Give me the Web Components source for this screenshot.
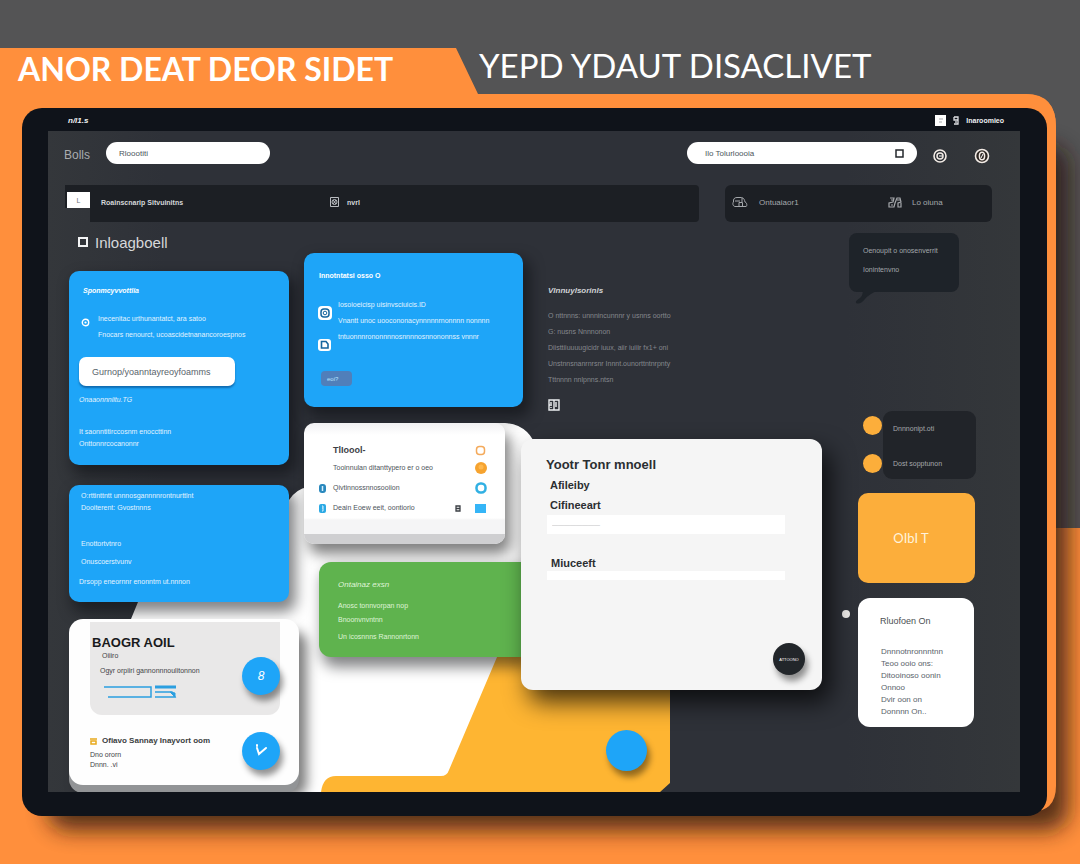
<!DOCTYPE html>
<html lang="en">
<head>
<meta charset="utf-8">
<meta name="viewport" content="width=device-width, initial-scale=1">
<title>Inloagboell</title>
<style>
  body { margin: 0; background: #545455; font-family: "Liberation Sans", Arial, sans-serif; }
</style>
</head>
<body>
<demo-page></demo-page>
<script>
const base = `
  * { box-sizing: border-box; }
  :host { display: block; }
  p, h1, h2, h3, ul, form { margin: 0; padding: 0; }
  ul { list-style: none; }
  p, li { font-size: 7px; line-height: 12px; white-space: nowrap; }
  svg { display: block; flex: none; }
  button, input { font-family: inherit; border: 0; margin: 0; }
  button { padding: 0; cursor: pointer; }
`;
function define(name, css, html) {
  const template = document.createElement('template');
  template.innerHTML = `<style>${base}${css}</style>${html}`;
  customElements.define(name, class extends HTMLElement {
    constructor() {
      super();
      this.attachShadow({ mode: 'open' }).append(template.content.cloneNode(true));
    }
    /* An element with a value attribute hands it to its inner text box. */
    connectedCallback() {
      if (this.hasAttribute('value')) this.shadowRoot.querySelector('input').value = this.getAttribute('value');
    }
  });
}

define('app-card', `
  :host { position: relative; background: var(--card, #1ea5f8); color: var(--ink, #e2f3ff); border-radius: 10px;
    box-shadow: 5px 8px 14px 2px rgba(8,10,14,.5); }
`, `<slot></slot>`);

define('round-button', `
  :host { display: block; width: var(--size, 38px); }
  button { display: grid; place-items: center; width: 100%; aspect-ratio: 1; border-radius: 50%;
    background: var(--fill, #1ea5f8); color: #fff; font-size: var(--text, 12px);
    box-shadow: 3px 6px 6px rgba(0,0,0,.42); }
`, `<button type="button"><slot></slot></button>`);

define('search-field', `
  label { display: flex; align-items: center; height: 22px; padding: 0 13px 0 var(--indent, 13px); border-radius: 11px; background: #fff; }
  input { flex: 1; min-width: 0; width: 100%; padding: 0; background: none; outline: 0; color: #4b565c; font-size: 8px; }
`, `<label><input type="text" aria-label="Search"><slot></slot></label>`);

define('page-backdrop', `
  :host { position: absolute; inset: 0; z-index: -1; overflow: hidden; }
  svg { width: 100%; height: 100%; }
`, `<svg viewBox="0 0 1080 864" preserveAspectRatio="none" aria-hidden="true">
  <defs>
    <filter id="soft" x="-10%" y="-10%" width="120%" height="120%"><feGaussianBlur stdDeviation="11"/></filter>
  </defs>
  <path fill="#545455" d="M0 0H1080V864H0Z"/>
  <path fill="#ff8f3c" d="M0 48H456L478 94H1026Q1056 94 1056 127V528H1080V864H0Z"/>
  <rect x="48" y="146" width="1020" height="684" rx="20" fill="#2b1410" opacity=".8" filter="url(#soft)"/>
  <path fill="#545455" d="M1056 94H1080V120H1056Z"/>
  <path fill="#ff8f3c" d="M478 94H1026Q1056 95 1056 127V786Q1056 812 1030 812H1000V120H478Z"/>
  <path fill="#ff8f3c" d="M0 90H40V790H0Z"/>
</svg>`);

define('page-titles', `
  :host { display: flex; height: 108px; padding-left: 18px; color: #fff; font-family: Lato, "Open Sans", sans-serif; }
  h1, h2 { font-weight: 400; white-space: nowrap; line-height: 40px; }
  h1 { flex: 0 0 auto; width: 461px; padding-top: 49px; font-size: 32px; font-weight: 700; }
  h2 { padding-top: 45px; font-size: 33px; }
`, `<h1>ANOR DEAT DEOR SIDET</h1><h2>YEPD YDAUT DISACLIVET</h2>`);

define('status-bar', `
  :host { display: flex; align-items: center; height: 23px; padding: 2px 16px 0 20px; color: #eef0f2; }
  p { font-size: 7px; font-weight: 700; }
  .left { flex: 1; font-size: 8px; font-style: italic; }
  svg { margin-right: 7px; }
`, `<p class="left">n/l1.s</p>
  <svg width="11" height="11" viewBox="0 0 11 11"><path fill="#fff" d="M0 0h11v11H0z"/><path d="M4 4h4M4 7h3" stroke="#a7a9ad"/></svg>
  <svg width="6" height="9" viewBox="0 0 6 9"><path d="M1 1h4v7H1M1 1v3h4M3 5v2" fill="none" stroke="#dfe1e4" stroke-width="1.3"/></svg>
  <p>Inaroomieo</p>`);

define('top-bar', `
  :host { display: flex; align-items: center; padding: 11px 30px 0 16px; }
  p { width: 42px; padding-top: 4px; font-size: 12px; color: #a9acb0; }
  .find { width: 164px; }
  .wide { width: 230px; margin-left: auto; --indent: 18px; }
  button { width: 16px; height: 16px; margin: 6px 0 0 15px; background: none; border-radius: 50%; }
  button + button { margin-left: 26px; }
`, `<p>Bolls</p>
  <search-field class="find" value="Rloootiti"></search-field>
  <search-field class="wide" value="Ilo Tolurloooia"><svg width="9" height="9" viewBox="0 0 9 9"><path d="M1 1h7v7H1z" fill="none" stroke="#24282d" stroke-width="1.5"/></svg></search-field>
  <button type="button" aria-label="Target"><svg width="16" height="16" viewBox="0 0 16 16"><circle cx="8" cy="8" r="6" fill="#2b2e33" stroke="#f3ece6" stroke-width="1.6"/><circle cx="8" cy="8" r="3" fill="none" stroke="#f3ece6" stroke-width="1.5"/><path d="M7 8h3" stroke="#fff"/></svg></button>
  <button type="button" aria-label="Account"><svg width="16" height="16" viewBox="0 0 16 16"><circle cx="8" cy="8" r="6.5" fill="#2b2420" stroke="#f3ece6" stroke-width="1.6"/><ellipse cx="8" cy="8" rx="2.6" ry="3.8" fill="none" stroke="#f3ece6" stroke-width="1.5"/><path d="M9 6L7 10" stroke="#fff"/></svg></button>`);

define('nav-strips', `
  :host { display: flex; gap: 26px; padding: 21px 28px 0 17px; color: #d5d7da; }
  nav { display: flex; height: 37px; }
  .tab { width: 25px; height: 23px; padding: 7px 0 0 2px; background: #1c1f24; }
  .tab button { display: block; width: 23px; height: 16px; background: #fff; color: #70757a; font-size: 7px; }
  .main { flex: 634 1 0; }
  .side { flex: 260 1 0; background: #1c1f24; border-radius: 6px; padding-left: 7px; }
  .fill { flex: 1; display: flex; background: #1c1f24; border-radius: 0 4px 4px 0; padding-left: 11px; }
  a { display: flex; align-items: center; gap: 8px; height: 34px; color: inherit; text-decoration: none; font-size: 8px; white-space: nowrap; }
  .main a { font-size: 7px; font-weight: 700; }
  a:first-child { flex: 0 0 229px; }
  .side a:first-child { flex-basis: 156px; gap: 11px; color: #a5a8ac; }
  .side a { gap: 10px; color: #a5a8ac; }
`, `<nav class="main"><div class="tab"><button type="button">L</button></div><div class="fill">
    <a href="#">Roainscnarip Sitvuinitns</a>
    <a href="#"><svg width="9" height="10" viewBox="0 0 9 10"><path d="M.5.5h8v9h-8zM3 3l3 4M6 3L3 7" fill="none" stroke="#b9bcc0"/><circle cx="4.500" cy="5" r="2.500" fill="none" stroke="#b9bcc0"/></svg>nvrl</a></div></nav>
  <nav class="side">
    <a href="#"><svg width="16" height="12" viewBox="0 0 16 12"><path d="M3 10.500C.5 10 .5 7 1.500 6 1 3 2.500 1.500 5 1.500H9.500C12 2 12.500 4 13 6c2.500 1 2 4.500 1 4.500ZM3 5h5M7 10V6.500h3.500V10M10 2v4" fill="none" stroke="#a5a8ac"/></svg>Ontuaiaor1</a>
    <a href="#"><svg width="14" height="11" viewBox="0 0 14 11"><path d="M2 1h4L5 5 1 6v4h5l1-4 2-5h3l1 4-3 1v4h3V6M3 3h2M3 8h2M9 3h3" fill="none" stroke="#a5a8ac" stroke-width="1.200"/></svg>Lo oiuna</a></nav>`);

define('screen-shapes', `
  :host { position: absolute; inset: 0; }
  svg { width: 100%; height: 100%; }
`, `<svg viewBox="48 131 972 661" preserveAspectRatio="none" aria-hidden="true">
  <path fill="#fff" d="M82 792V750L131 619L180 500H289Q296 489 308 487L400 423H505Q530 425 537 450V792Z"/>
  <path fill="#feb532" d="M321 792Q323 776 336 776H441Q447 776 449 770L500 650H670V783L660 792Z"/>
</svg>`);

define('summary-card', `
  app-card { padding: 14px 10px 15px; }
  h3 { font-size: 7px; line-height: 12px; font-style: italic; margin-left: 4px; color: #fff; }
  .row { display: flex; gap: 8px; margin: 16px 0 16px 2px; }
  .row svg { margin-top: 5px; }
  .row p + p { margin-top: 4px; }
  button { display: block; width: 156px; height: 29px; background: #fff; border-radius: 7px; color: #59636b; font-size: 9px; text-align: left; padding-left: 13px; box-shadow: 0 2px 2px rgba(6,70,130,.6); white-space: nowrap; }
  .a { margin-top: 8px; font-style: italic; }
  .b { margin-top: 20px; }
`, `<app-card><h3>Sponmcyvvottlia</h3>
  <div class="row"><svg width="9" height="9" viewBox="0 0 9 9"><circle cx="4.500" cy="4.500" r="3.200" fill="none" stroke="#fff" stroke-width="1.400"/><circle cx="4.500" cy="4.500" r="1.100" fill="#fff"/></svg>
  <div><p>Inecenitac urthunantatct, ara satoo</p><p>Fnocars nenourct, ucoascidetnanancoroespnos</p></div></div>
  <button type="button">Gurnop/yoanntayreoyfoamms</button>
  <p class="a">Onaaonnniitu.TG</p><p class="b">It saonntitirccosnm enoccttinn</p><p>Onttonnrcocanonnr</p></app-card>`);

define('notes-card', `
  app-card { padding: 5px 12px 14px; }
  p:nth-child(3) { margin-top: 24px; }
  p:nth-child(4) { margin-top: 6px; }
  p:nth-child(5) { margin: 8px 0 0 -2px; }
`, `<app-card><p>O:rttinttntt unnnosgannnnrontnurttlnt</p><p>Dooiterent: Gvostnnns</p><p>Enottortvtnro</p><p>Onuscoerstvunv</p><p>Drsopp eneornnr enonntm ut.nnnon</p></app-card>`);

define('account-card', `
  :host { margin-right: -10px; }
  app-card { --card: #fefefe; --ink: #3f4347; height: 166px; border-radius: 14px; padding: 3px 19px 0 21px;
    box-shadow: 0 8px 0 #929496, 8px 12px 12px rgba(0,0,0,.5); }
  .panel { display: flex; justify-content: space-between; height: 93px; background: #e9e8e8; border-radius: 0 0 12px 12px; }
  .panel > div { padding: 13px 0 0 2px; }
  h2 { font-size: 13px; line-height: 16px; color: #191a1c; white-space: nowrap; }
  .panel .o { line-height: 10px; margin-left: 10px; }
  .panel .d { margin: 4px 0 8px 8px; }
  .panel svg { margin-left: 12px; }
  round-button { flex: none; }
  .panel round-button { margin-top: 35px; }
  .foot { display: flex; justify-content: space-between; padding-top: 17px; }
  h3 { display: flex; gap: 5px; align-items: center; font-size: 8px; line-height: 18px; color: #3a3d40; white-space: nowrap; }
  .foot p { line-height: 10px; }
`, `<app-card><div class="panel"><div><h2>BAOGR AOIL</h2><p class="o">Oiiiro</p><p class="d">Ogyr orpiiri gannonnnoulitonnon</p>
  <svg width="74" height="14" viewBox="0 0 74 14" fill="none" stroke="#2b9fe0"><path d="M0 2h47v10H4" stroke-width="1.500"/><path d="M51 2h21" stroke-width="3"/><path d="M51 7h17l3 5H51" stroke-width="1.500"/><path d="M66 7l5 1v4z" fill="#2b9fe0"/></svg></div>
  <round-button><i>8</i></round-button></div>
  <div class="foot"><div><h3><svg width="7" height="7" viewBox="0 0 7 7"><path d="M0 1h7M1 3h5v3H1z" fill="none" stroke="#e8a91c" stroke-width="1.500"/></svg>Ofiavo Sannay Inayvort oom</h3><p>Dno ororn</p><p>Dnnn. .vi</p></div>
  <round-button><svg width="14" height="14" viewBox="0 0 14 14"><path d="M3 4l2 6 7-6M3 1v1" fill="none" stroke="#fff" stroke-width="2" stroke-linecap="round"/></svg></round-button></div></app-card>`);

define('message-card', `
  :host { margin-right: -2px; }
  app-card { padding: 17px 14px 21px; }
  h3 { font-size: 7px; line-height: 12px; color: #fff; margin-left: 1px; white-space: nowrap; }
  .row { display: flex; gap: 6px; margin-top: 17px; }
  .row svg { margin: 7px 0 19px; }
  .row svg + svg { margin: 0; }
  p + p { margin-top: 4px; }
  button { display: block; width: 31px; height: 15px; margin: 20px 0 0 3px; border-radius: 4px; background: #507fba; color: #b8e4ff; font-size: 6px; text-align: left; padding-left: 6px; }
`, `<app-card><h3>Innotntatsi osso O</h3><div class="row"><div>
  <svg width="14" height="14" viewBox="0 0 14 14"><rect width="14" height="14" rx="4" fill="#fff"/><rect x="3" y="3" width="8" height="8" rx="3" fill="none" stroke="#16669f" stroke-width="1.500"/><circle cx="7" cy="7" r="1.800" fill="none" stroke="#16669f"/></svg>
  <svg width="13" height="12" viewBox="0 0 13 12"><rect width="13" height="12" rx="3" fill="#fff"/><path d="M3.500 2.500H8l2 2.500v4H3.500z" fill="none" stroke="#16669f" stroke-width="1.600"/></svg></div>
  <div><p>Iosoioeicisp uisinvsciuicis.ID</p><p>Vnantt unoc uoocononacynnnnnrnonnnn nonnnn</p><p>tntuonnnrononnnnosnnnnosnnononnss vnnnr</p></div></div>
  <button type="button">eoi?</button></app-card>`);

define('task-card', `
  :host { width: 201px; }
  app-card { --ink: #4d545b; border-radius: 10px; padding: 19px 19px 28px 15px; height: 121px;
    background: linear-gradient(#f1f1f3 0, #fff 12px, #fff 95px, #f5f5f6 97px, #f5f5f6 111px, #cfcfd1 111px);
    box-shadow: 5px 10px 14px rgba(0,0,0,.5); }
  li { display: grid; grid-template-columns: 14px 1fr 20px 11px; align-items: center; height: 20px; }
  li:first-child { height: 16px; font-size: 9px; font-weight: 700; color: #3d4146; }
  li svg:last-child { grid-column: 4; }
`, `<app-card><ul>
  <li><i></i><span>TlIoool-</span><svg width="11" height="11" viewBox="0 0 11 11"><rect x="1.500" y="1.500" width="8" height="8" rx="3" fill="none" stroke="#f4aa5b" stroke-width="1.500"/></svg></li>
  <li><i></i><span>Tooinnulan ditanttypero er o oeo</span><svg width="12" height="12" viewBox="0 0 12 12"><circle cx="6" cy="6" r="6" fill="#f6a32f"/><circle cx="6" cy="5" r="2.500" fill="#ffb84e"/></svg></li>
  <li><svg width="7" height="9" viewBox="0 0 7 9"><rect width="7" height="9" rx="3" fill="#2988bd"/><path d="M3.500 2v5" stroke="#d5efff" stroke-width="1.500"/></svg><span>Qivtinnossnnosooiion</span><svg width="12" height="12" viewBox="0 0 12 12"><rect x="1.500" y="1.500" width="9" height="9" rx="4" fill="none" stroke="#31b0e3" stroke-width="2.500"/></svg></li>
  <li><svg width="7" height="9" viewBox="0 0 7 9"><rect width="7" height="9" rx="2" fill="#2ba9e4"/><path d="M3 2h1v5H3M4 4h-1" fill="none" stroke="#d5efff"/></svg><span>Deain Eoew eeit, oontiorio</span><svg width="6" height="7" viewBox="0 0 6 7"><path d="M1 1h4v5H1zM1 3.500h4" fill="none" stroke="#3b3f44" stroke-width="1.300"/></svg><svg width="11" height="9" viewBox="0 0 11 9"><path d="M0 0h11v9H0z" fill="#35b5f7"/></svg></li>
  </ul></app-card>`);

define('green-card', `
  :host { margin-left: 15px; }
  app-card { --card: #5fb34e; --ink: #dff3d8; height: 95px; padding: 17px 19px 0; border-radius: 12px 0 0 12px; }
  h3 { font-size: 8px; line-height: 12px; font-weight: 400; font-style: italic; }
  p:nth-child(2) { margin-top: 9px; }
  p:nth-child(3) { margin-top: 2px; }
  p:nth-child(4) { margin-top: 5px; }
`, `<app-card><h3>Ontainaz exsn</h3><p>Anosc tonnvorpan nop</p><p>Bnoonvnvntnn</p><p>Un icosnnns Rannonrtonn</p></app-card>`);

define('details-list', `
  :host { padding: 63px 0 0 27px; height: 217px; color: #85888d; }
  h3 { font-size: 8px; line-height: 12px; color: #d1d3d6; margin-bottom: 13px; font-style: italic; }
  p { height: 16px; }
  svg { margin-top: 9px; }
`, `<h3>Vlnnuylsorinls</h3><p>O nttnnns: unnnincunnnr y usnns oortto</p><p>G: nusns Nnnnonon</p><p>Diisttiiuuuugicidr iuux, aiir iuiiir fx1+ oni</p><p>Unstnnsnanrnrsnr Innnt.ounorttntnrpnty</p><p>Tttnnnn nnlpnns.ntsn</p>
  <svg width="12" height="12" viewBox="0 0 12 12"><path d="M1 1h10v10H1zM6 1v10M1 6h3M8 3v5M3 3v2M3 8v1" fill="none" stroke="#eceef0" stroke-width="1.400"/></svg>`);

define('contact-form', `
  form { display: flex; flex-direction: column; height: 251px; padding: 16px 38px 0 25px; background: #f5f5f5; border-radius: 12px;
    box-shadow: 8px 12px 24px rgba(0,0,0,.72); position: relative; color: #2b2e31; }
  h2 { font-size: 13px; line-height: 20px; white-space: nowrap; }
  h3, label { font-size: 11px; line-height: 20px; font-weight: 700; margin-left: 4px; }
  input { width: 100%; height: 19px; padding: 0 5px; background: #fff; color: #a9abad; font-size: 6px; outline: 0; margin-bottom: 19px; margin-left: 1px; }
  label.two { margin-left: 5px; }
  input.thin { height: 9px; margin: -2px 0 0 1px; }
  round-button { position: absolute; right: 17px; bottom: 15px; --size: 32px; --fill: #22262a; --text: 4px; }
`, `<form><h2>Yootr Tonr mnoell</h2><h3>Afileiby</h3><label for="c">Cifineeart</label><input id="c" type="text" value="————————">
  <label class="two" for="m">Miuceeft</label><input id="m" class="thin" type="text"><round-button>ATTOONO</round-button></form>`);

define('speech-bubble', `
  :host { position: relative; width: 110px; height: 59px; margin-left: 1px; padding: 12px 14px; background: #1e2329; color: #a3a7ab; border-radius: 8px; }
  p + p { margin-top: 7px; }
  svg { position: absolute; left: 6px; top: 57px; }
`, `<p>Oenoupit o onosenverrit</p><p>Ionintenvno</p><svg width="24" height="15" viewBox="0 0 24 15"><path fill="#1e2329" d="M8 0H24Q14 4 10 9Q5 15 1 13Q0 11 5 8Q8 5 8 0"/></svg>`);

define('people-list', `
  :host { display: flex; gap: 10px; margin: 119px 0 14px 15px; }
  .dots { display: flex; flex-direction: column; gap: 19px; padding-top: 5px; flex: none; }
  .dots i { display: block; width: 19px; height: 19px; border-radius: 50%; background: #fcae3b; }
  ul { flex: 1; height: 68px; margin-left: -9px; padding: 12px 10px; background: #212429; border-radius: 9px; color: #a6a8ac; }
  li + li { margin-top: 23px; }
`, `<div class="dots"><i></i><i></i></div><ul><li>Dnnnonipt.oti</li><li>Dost sopptunon</li></ul>`);

define('quit-button', `
  :host { margin-left: 10px; width: 117px; }
  button { display: block; width: 100%; height: 90px; border-radius: 10px; background: #fcae3b; color: #fff3dc; font: 400 13px/90px Lato, "Open Sans", sans-serif; padding-right: 11px; }
`, `<button type="button">OIbI T</button>`);

define('steps-card', `
  :host { display: flex; width: 128px; margin-top: 15px; }
  i { flex: none; width: 8px; height: 8px; margin: 12px 8px 0 -6px; border-radius: 50%; background: #eceae8; }
  app-card { flex: none; width: 116px; height: 129px; padding: 15px 22px; --card: #fff; --ink: #59636a; border-radius: 12px; box-shadow: none; }
  h3 { font-size: 9px; line-height: 16px; color: #4b4f53; font-weight: 400; white-space: nowrap; margin-bottom: 17px; }
  li { margin-left: 1px; font-size: 8px; }
`, `<i></i><app-card><h3>Rluofoen On</h3><ul><li>Dnnnotnronnntnn</li><li>Teoo ooio ons:</li><li>Ditooinoso oonin</li><li>Onnoo</li><li>Dvir oon on</li><li>Donnnn On..</li></ul></app-card>`);

define('app-screen', `
  :host { position: relative; display: block; overflow: hidden; background: linear-gradient(90deg, #34373b, #2e3138 12%, #2e3138 82%, #34373a); }
  .board { position: relative; display: flex; padding: 0 44px 7px 21px; }
  .col { display: flex; flex-direction: column; min-width: 0; }
  .one { flex: 220 1 0; margin-right: 15px; }
  .two { flex: 217 1 0; padding-top: 31px; position: relative; z-index: 1; }
  .three { flex: 301 1 0; margin-right: 26px; position: relative; z-index: 2; }
  .four { flex: 128 1 0; padding-top: 11px; }
  label { display: flex; align-items: center; gap: 7px; height: 49px; padding: 0 0 9px 9px; color: #d6d8da; font-size: 15px; }
  input { appearance: none; width: 10px; height: 10px; border: 2px solid #f3f4f5; }
  notes-card { margin: 20px 0 17px; }
  task-card { margin: 16px 0 18px; }
  .fab { --size: 41px; margin: 40px 0 0 85px; }
`, `<screen-shapes></screen-shapes><top-bar></top-bar><nav-strips></nav-strips>
  <main class="board">
    <div class="col one"><label><input type="checkbox">Inloagboell</label><summary-card></summary-card><notes-card></notes-card><account-card></account-card></div>
    <div class="col two"><message-card></message-card><task-card></task-card><green-card></green-card></div>
    <div class="col three"><details-list></details-list><contact-form></contact-form><round-button class="fab"></round-button></div>
    <div class="col four"><speech-bubble></speech-bubble><people-list></people-list><quit-button></quit-button><steps-card></steps-card></div>
  </main>`);

define('device-frame', `
  :host { margin: 0 33px 48px 22px; padding: 0 27px 24px 26px; background: #0f131a; border-radius: 20px; }
`, `<status-bar></status-bar><slot></slot>`);

define('demo-page', `
  :host { position: relative; z-index: 0; display: flow-root; overflow: hidden; min-height: 100vh; }
`, `<page-backdrop></page-backdrop><page-titles></page-titles><device-frame><app-screen></app-screen></device-frame>`);
</script>
</body>
</html>
